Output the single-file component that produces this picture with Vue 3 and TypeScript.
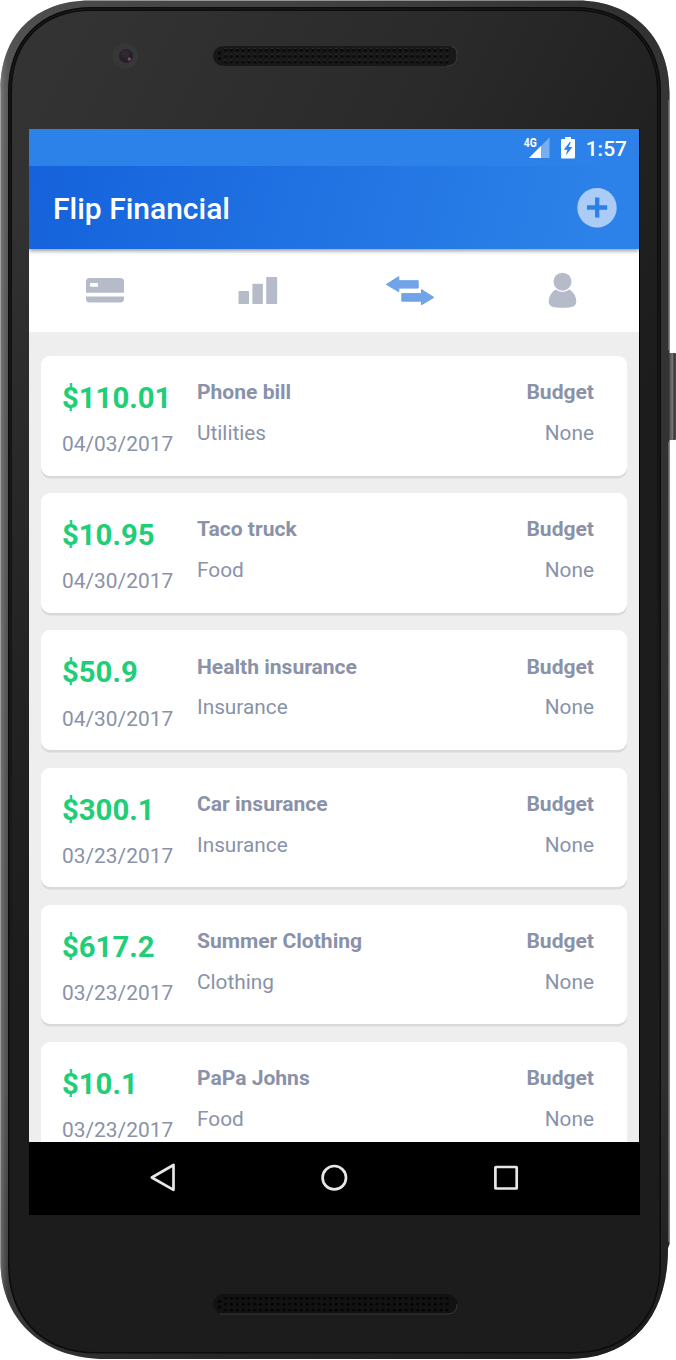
<script setup lang="ts">
interface Transaction {
  amount: string
  date: string
  name: string
  category: string
}

const transactions: Transaction[] = [
  { amount: '$110.01', date: '04/03/2017', name: 'Phone bill', category: 'Utilities' },
  { amount: '$10.95', date: '04/30/2017', name: 'Taco truck', category: 'Food' },
  { amount: '$50.9', date: '04/30/2017', name: 'Health insurance', category: 'Insurance' },
  { amount: '$300.1', date: '03/23/2017', name: 'Car insurance', category: 'Insurance' },
  { amount: '$617.2', date: '03/23/2017', name: 'Summer Clothing', category: 'Clothing' },
  { amount: '$10.1', date: '03/23/2017', name: 'PaPa Johns', category: 'Food' },
]

const outline =
  'M90 .5H578C629 .5 669.500 34 669.500 92V1244L668 1248C668 1318 631 1359 568 1359H106C39 1359 .5 1316 .5 1262V90C.5 35 35 .5 90 .5Z'
const inner =
  'M92 9H575C625 9 659 42 659 92V1264C659 1317 627 1351.500 572 1351.500H96C42 1351.500 10 1316 10 1264V92C10 41 42 9 92 9Z'
</script>

<template>
  <div class="phone">
    <svg class="shell" width="676" height="1360" viewBox="0 0 676 1360" aria-hidden="true">
      <defs>
        <linearGradient id="rim" x1="0" y1="0" x2="0" y2="1">
          <stop offset="0" stop-color="#4b494a" />
          <stop offset=".06" stop-color="#5a5859" />
          <stop offset=".8" stop-color="#4c4a4b" />
          <stop offset=".95" stop-color="#302f30" />
          <stop offset="1" stop-color="#272627" />
        </linearGradient>
        <linearGradient id="rimSide" x1="0" y1="0" x2="1" y2="0">
          <stop offset="0" stop-color="#8a8889" stop-opacity=".65" />
          <stop offset=".012" stop-color="#555" stop-opacity=".3" />
          <stop offset=".4" stop-color="#222" stop-opacity=".2" />
          <stop offset="1" stop-color="#111" stop-opacity=".5" />
        </linearGradient>
        <linearGradient id="face" gradientUnits="userSpaceOnUse" x1="30" y1="100" x2="640" y2="420">
          <stop offset="0" stop-color="#333334" />
          <stop offset=".5" stop-color="#2a2a2b" />
          <stop offset="1" stop-color="#1c1c1c" />
        </linearGradient>
        <linearGradient id="shade" x1="0" y1="0" x2="0" y2="1">
          <stop offset=".15" stop-color="#1c1c1d" stop-opacity="0" />
          <stop offset=".75" stop-color="#1c1c1d" />
        </linearGradient>
        <linearGradient id="key" x1="0" y1="0" x2="1" y2="0">
          <stop offset="0" stop-color="#504e4f" />
          <stop offset=".55" stop-color="#777576" />
          <stop offset=".7" stop-color="#353334" />
          <stop offset="1" stop-color="#504e4f" />
        </linearGradient>
        <pattern id="holes" x="223.500" y="47" width="5.820" height="5.900" patternUnits="userSpaceOnUse">
          <circle cx="2.100" cy="3.200" r="1.500" fill="#080808" />
          <path d="M1.200 1.600q1-.8 2 .1" stroke="#454546" stroke-width=".6" fill="none" />
        </pattern>
        <pattern id="holesLow" x="223.500" y="1295" width="5.820" height="5.900" patternUnits="userSpaceOnUse">
          <circle cx="2.100" cy="3.200" r="1.500" fill="#030303" />
        </pattern>
      </defs>
      <rect x="669" y="353" width="7" height="87" rx="1" fill="url(#key)" />
      <path :d="outline" fill="url(#rim)" />
      <path :d="outline" fill="url(#rimSide)" />
      <path d="M669 100V350M669 442V1242" stroke="#858384" stroke-width="1.200" />
      <path :d="inner" fill="url(#face)" stroke="#0c0c0c" stroke-width="4" />
      <path :d="inner" fill="none" stroke="#1c1c1d" stroke-width="1" />
      <path :d="inner" fill="url(#shade)" />
      <circle cx="125.300" cy="56" r="13" fill="#373738" />
      <circle cx="126" cy="56" r="7" fill="#242128" />
      <circle cx="125" cy="54" r="4" fill="#302735" />
      <circle cx="129.300" cy="59" r="1.700" fill="#765057" />
      <rect x="213" y="46" width="244.500" height="20" rx="10" fill="#181818" />
      <path d="M447 66q10 0 10-10t-5-9" fill="none" stroke="#3d3d3e" />
      <rect x="223.500" y="47" width="227" height="17.700" fill="url(#holes)" />
      <g fill="#070707"><circle cx="219.500" cy="53" r="1.500" /><circle cx="219.500" cy="58.500" r="1.500" /></g>
      <rect x="213" y="1294" width="244.500" height="20" rx="10" fill="#121212" />
      <path d="M220 1314H447q10 0 10-10" fill="none" stroke="#363637" />
      <rect x="223.500" y="1295" width="227" height="17.700" fill="url(#holesLow)" />
      <g fill="#030303"><circle cx="219.500" cy="1301.500" r="1.500" /><circle cx="219.500" cy="1307" r="1.500" /></g>
    </svg>

    <main class="screen">
      <div class="status">
        <svg width="30" height="24" viewBox="-3 0 30 24">
          <path d="M5 21L25.500 .5V21Z" fill="#78aff1" />
          <path d="M5 21L17 9V21Z" fill="#fff" />
          <text class="net" x="-.3" y="9.700" textLength="13" lengthAdjust="spacingAndGlyphs">4G</text>
        </svg>
        <svg class="battery" width="14" height="22" viewBox="0 0 14 22">
          <path d="M4 0h6v2h3q1 0 1 1v17q0 1.500-1.200 1.500H1.200Q0 21.500 0 20V3q0-1 1-1h3Z" fill="#fff" />
          <path d="M8.700 5L2.700 12.700H6.400L4.800 18.500 11.400 10H7.700L9.800 5Z" fill="#2c82e8" />
        </svg>
        <span class="clock">1:57</span>
      </div>

      <header class="header">
        <h1>Flip Financial</h1>
        <button class="add" aria-label="Add transaction">
          <svg width="40" height="40" viewBox="0 0 40 40">
            <circle cx="20" cy="19.700" r="19.700" fill="#abccf6" />
            <path d="M20.200 9.500V29.500M10 19.500H30.200" stroke="#2b80e8" stroke-width="4.300" />
          </svg>
        </button>
      </header>

      <nav class="tabs">
        <a class="tab">
          <svg width="50" height="40" viewBox="0 0 50 40">
            <path d="M9.500 8H40.300Q44 8 44 11.700V22.700H6V11.700Q6 8 9.500 8ZM6 26.500H44V28.500Q44 32.500 40.300 32.500H9.500Q6 32.500 6 28.500Z" fill="#b5bbc9" />
            <rect x="10" y="13" width="8" height="3.700" rx=".8" fill="#fff" />
          </svg>
        </a>
        <a class="tab">
          <svg width="50" height="40" viewBox="0 0 50 40" fill="#b5bbc9">
            <rect x="5.500" y="21" width="10.500" height="13" rx=".8" />
            <rect x="19.400" y="13.700" width="10.500" height="20.300" rx=".8" />
            <rect x="33.200" y="7" width="11" height="27" rx=".8" />
          </svg>
        </a>
        <a class="tab">
          <svg width="50" height="40" viewBox="0 0 50 40" fill="#71a3e9" stroke="#71a3e9" stroke-linejoin="round">
            <path d="M1.300 14.400L13.800 6.600V10.700H33.200V18.100H13.800V21.800ZM48.800 27.400L36.500 19.500V23.600H16.800V31.200H36.500V34.800Z" />
          </svg>
        </a>
        <a class="tab">
          <svg width="50" height="40" viewBox="0 0 50 40" fill="#b5bbc9">
            <circle cx="24.500" cy="11.700" r="9" />
            <path d="M17.400 19.500Q24.500 24.300 31.600 19.500Q38.300 24.400 38.300 31.500C38.300 37 33 37.700 24.500 37.700S10.700 37 10.700 31.500Q10.700 24.400 17.400 19.500Z" />
          </svg>
        </a>
      </nav>

      <section class="list">
        <article v-for="(item, index) in transactions" :key="index" class="card">
          <div class="money">
            <strong class="amount">{{ item.amount }}</strong>
            <span class="date">{{ item.date }}</span>
          </div>
          <div class="details">
            <strong>{{ item.name }}</strong>
            <span>{{ item.category }}</span>
          </div>
          <div class="details budget">
            <strong>Budget</strong>
            <span>None</span>
          </div>
        </article>
      </section>

      <footer class="controls">
        <svg width="610" height="73" viewBox="0 0 610 73" fill="none" stroke="#e7e7e7" stroke-width="2.700" stroke-linejoin="round">
          <path d="M122.800 35.500L144.500 23V47.800Z" />
          <circle cx="305.300" cy="35.700" r="11.700" />
          <rect x="466.400" y="25" width="21.300" height="21.500" rx=".5" />
        </svg>
      </footer>
    </main>
  </div>
</template>

<style>
body {
  margin: 0;
  background: #fff;
}
</style>

<style scoped>
* {
  box-sizing: border-box;
}

.phone {
  position: relative;
  width: 676px;
  height: 1360px;
  padding: 129px 0 0 29px;
  overflow: hidden;
  font-family: Roboto, "Liberation Sans", sans-serif;
}

.shell {
  position: absolute;
  inset: 0;
}

.screen {
  position: relative;
  display: flex;
  flex-direction: column;
  width: 610px;
  height: 1086px;
  background: #000;
  box-shadow: 1px 0 #000;
}

svg {
  display: block;
}

.status {
  display: flex;
  align-items: flex-start;
  justify-content: flex-end;
  height: 37px;
  padding: 8px 12px 0 0;
  background: #2c82e8;
  color: #fff;
}

.battery {
  margin: 0 11px 0 10px;
}

.net {
  fill: #fff;
  font-family: Roboto, sans-serif;
  font-size: 12.500px;
  font-weight: 700;
  paint-order: stroke;
  stroke: #2c82e8;
  stroke-width: 1px;
}

.clock {
  font-size: 21px;
  font-weight: 500;
  line-height: 24px;
}

.header {
  position: relative;
  z-index: 1;
  display: flex;
  align-items: center;
  justify-content: space-between;
  height: 83px;
  padding: 0 22px 0 24px;
  background: linear-gradient(105deg, #1562dc, #2c82e8 92%);
  box-shadow: 0 2px 4px rgba(0, 0, 0, .4);
  clip-path: inset(0 0 -8px);
}

h1 {
  margin: 3px 0 0;
  color: #fff;
  font-size: 30px;
  font-weight: 500;
  line-height: 36px;
}

.add {
  padding: 0;
  border: 0;
  background: none;
}

.tabs {
  display: grid;
  grid-template-columns: repeat(4, 1fr);
  height: 83px;
  background: #fff;
}

.tab {
  display: flex;
  justify-content: center;
  padding-top: 21px;
}

.list {
  display: flex;
  flex-direction: column;
  gap: 17.700px;
  height: 810px;
  padding: 24px 12px 0;
  overflow: hidden;
  background: #eee;
}

.card {
  display: flex;
  flex: 0 0 119.500px;
  padding: 0 33px 0 21px;
  border-radius: 9px;
  background: #fff;
  box-shadow: 0 2.500px .5px #d9d9d9;
}

.money,
.details {
  display: flex;
  flex-direction: column;
}

.money {
  width: 135px;
  padding-top: 24px;
}

.amount {
  color: #1fce78;
  font-size: 29.300px;
  line-height: 36px;
}

.date {
  margin-top: 14.200px;
  color: #8992a8;
  font-size: 20.900px;
  line-height: 28px;
}

.details {
  gap: 12.800px;
  padding-top: 22.300px;
  color: #8992a8;
  font-size: 20.800px;
  line-height: 28px;
}

.details strong {
  font-size: 21.050px;
}

.budget {
  margin-left: auto;
  align-items: flex-end;
}

.controls {
  height: 73px;
  background: #000;
}
</style>
